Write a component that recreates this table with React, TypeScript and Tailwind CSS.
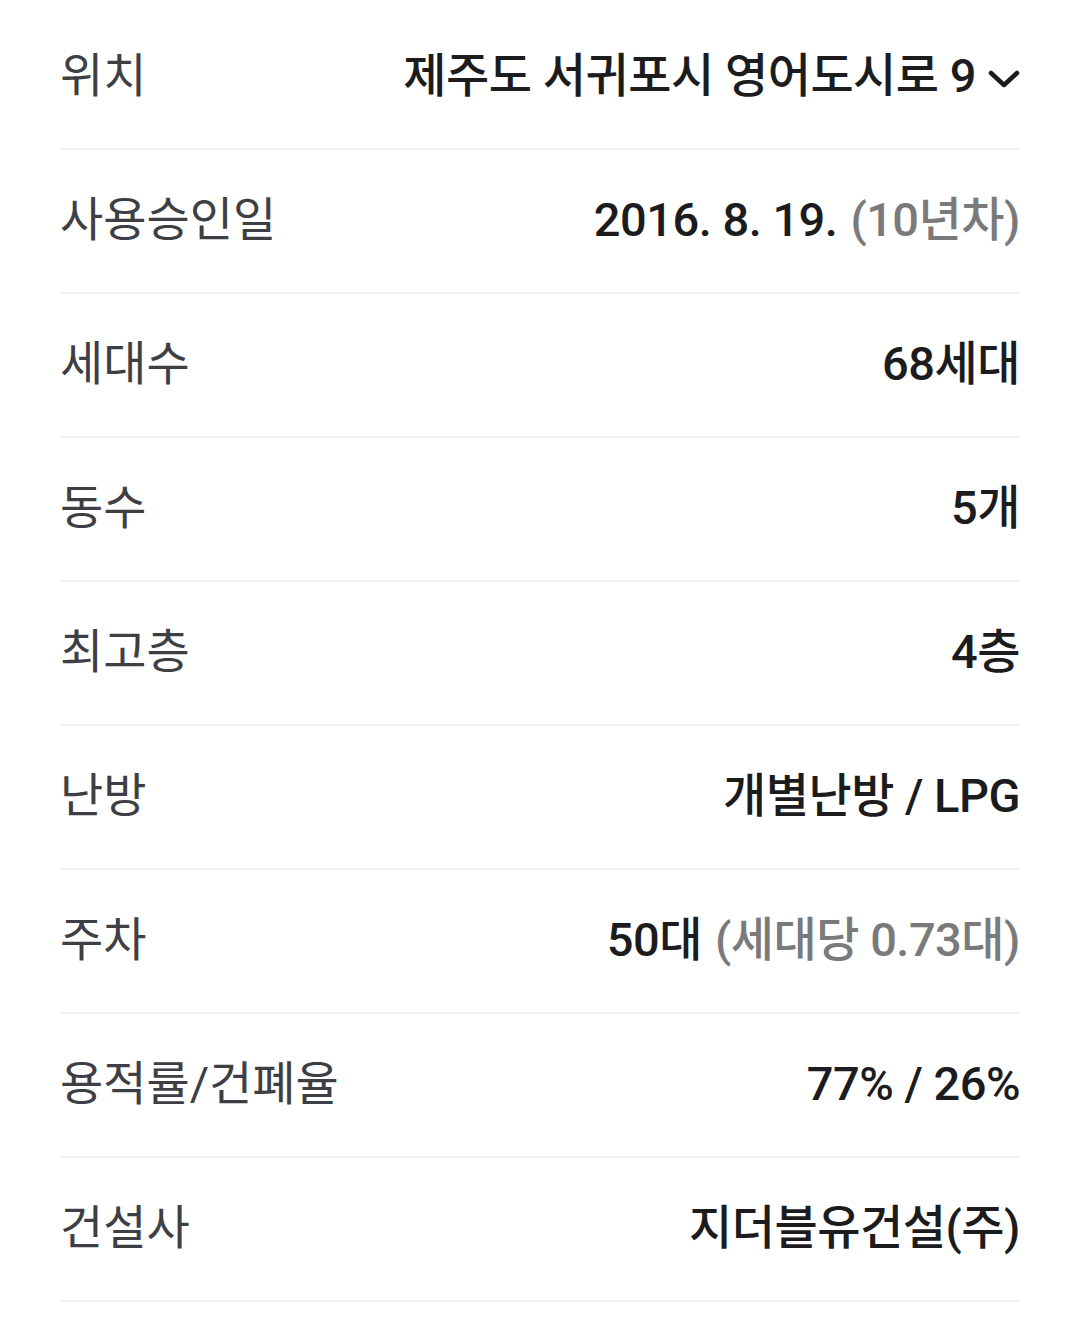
interface RowProps {
  label: string;
  value: React.ReactNode;
}

const font = { fontFamily: 'Roboto, "Noto Sans CJK KR", "Noto Sans", sans-serif' };

function InfoRow({ label, value }: RowProps) {
  return (
    <div className="flex h-[144px] items-center justify-between border-b-2 border-[#f2f2f2] pb-[1px]">
      <span className="text-[47px] text-[#3e3f44]">{label}</span>
      <span className="flex items-center text-[47px] font-medium tracking-[-0.5px] text-[#1c1c1e]">{value}</span>
    </div>
  );
}

const Sub = ({ children }: { children: React.ReactNode }) => (
  <span className="ml-[13px] text-[#7a7a7a]">{children}</span>
);

export default function App() {
  return (
    <div className="min-h-screen bg-white" style={font}>
      <div className="mx-[60px] pt-[6px]">
        <InfoRow
          label="위치"
          value={
            <>
              제주도 서귀포시 영어도시로 9
              {/* chevron */}
              <svg className="ml-[12px] mt-[4px]" width="32" height="22" viewBox="0 0 32 22" fill="none">
                <polyline
                  points="3,5 16,17 29,5"
                  stroke="#1c1c1e"
                  strokeWidth="4.5"
                  strokeLinecap="round"
                  strokeLinejoin="round"
                />
              </svg>
            </>
          }
        />
        <InfoRow
          label="사용승인일"
          value={
            <>
              2016. 8. 19.<Sub>(10년차)</Sub>
            </>
          }
        />
        <InfoRow label="세대수" value="68세대" />
        <InfoRow label="동수" value="5개" />
        <InfoRow label="최고층" value="4층" />
        <InfoRow label="난방" value="개별난방 / LPG" />
        <InfoRow
          label="주차"
          value={
            <>
              50대<Sub>(세대당 0.73대)</Sub>
            </>
          }
        />
        <InfoRow label="용적률/건폐율" value="77% / 26%" />
        <InfoRow label="건설사" value="지더블유건설(주)" />
      </div>
    </div>
  );
}
